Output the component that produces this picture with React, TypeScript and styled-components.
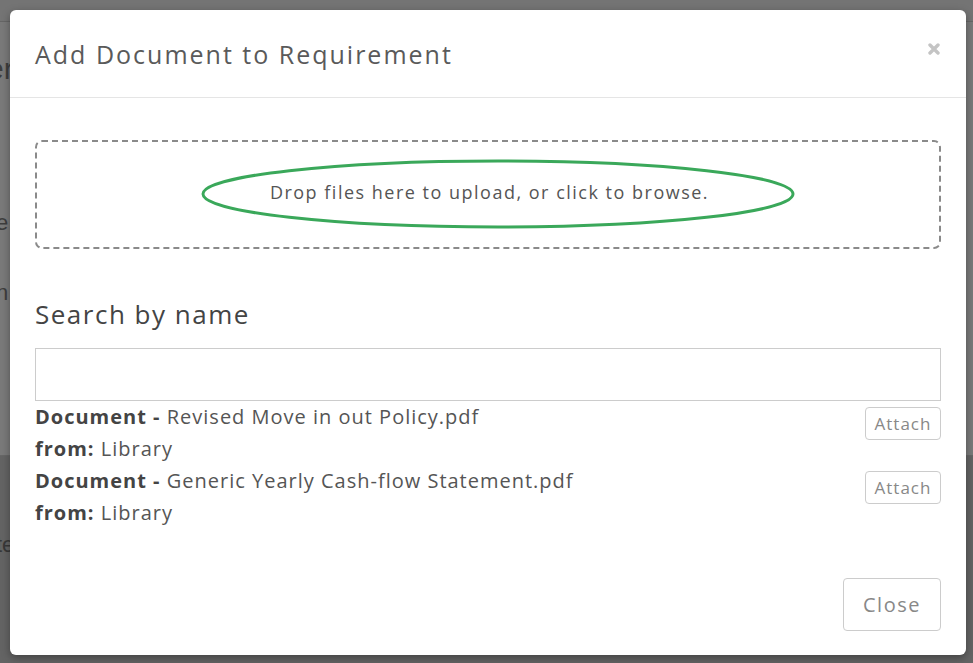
import React from 'react';
import styled, { createGlobalStyle } from 'styled-components';

const GlobalStyle = createGlobalStyle`
  html, body {
    margin: 0;
    padding: 0;
    height: 100%;
  }
  body {
    background: #6c6c6c;
    font-family: 'Open Sans', 'Liberation Sans', sans-serif;
    overflow: hidden;
  }
  * {
    box-sizing: border-box;
  }
`;

const Page = styled.div`
  position: relative;
  width: 973px;
  height: 663px;
  display: flex;
  flex-direction: column;
`;

const PageTop = styled.div`
  height: 22px;
  background: #747474;
  border-bottom: 1px solid #666;
`;

const PagePanel = styled.div`
  height: 434px;
  background: #7a7a7a;
  border-bottom: 1px solid #676767;
  display: flex;
  flex-direction: column;
  align-items: flex-start;
`;

const GhostText = styled.span<{ $size: number; $top: number; $shift: number }>`
  font-family: 'Liberation Sans', sans-serif;
  color: #2a2a2a;
  font-size: ${(p) => p.$size}px;
  line-height: ${(p) => p.$size + 4}px;
  margin-top: ${(p) => p.$top}px;
  margin-left: ${(p) => p.$shift}px;
  white-space: nowrap;
  opacity: 0.75;
`;

const PageRest = styled.div`
  flex: 1;
  background: #646464;
  display: flex;
  flex-direction: column;
  align-items: flex-start;
`;

const Modal = styled.div`
  position: absolute;
  left: 10px;
  top: 10px;
  width: 956px;
  height: 645px;
  background: #fff;
  border-radius: 6px;
  box-shadow: 0 3px 9px rgba(0, 0, 0, 0.35);
  display: flex;
  flex-direction: column;
`;

const Header = styled.div`
  height: 88px;
  border-bottom: 1px solid #e5e5e5;
  display: flex;
  align-items: center;
  justify-content: space-between;
  padding: 0 25px 0 25px;
`;

const Title = styled.h4`
  margin: 0;
  font-size: 25px;
  font-weight: 400;
  color: #5a5a5a;
  letter-spacing: 2px;
  padding-top: 1px;
`;

const CloseX = styled.button`
  border: none;
  background: none;
  padding: 0;
  margin-right: 1px;
  margin-bottom: 10px;
  display: flex;
  cursor: pointer;
`;

const Body = styled.div`
  padding: 42px 25px 0 25px;
  display: flex;
  flex-direction: column;
  flex: 1;
`;

const DropZone = styled.div`
  position: relative;
  height: 109px;
  border: 2px dashed #8a8a8a;
  border-radius: 7px;
  display: flex;
  align-items: center;
  justify-content: center;
  color: #555;
  font-size: 18px;
  letter-spacing: 1.5px;
`;

const DropText = styled.span`
  margin-left: 3px;
  margin-bottom: 5px;
`;

const Annotation = styled.svg`
  position: absolute;
  left: 163px;
  top: 16px;
  pointer-events: none;
`;

const SectionHeading = styled.h3`
  margin: 48px 0 0 0;
  font-size: 26px;
  font-weight: 400;
  color: #444;
  line-height: 34px;
  letter-spacing: 1.5px;
`;

const SearchInput = styled.input`
  margin-top: 17px;
  height: 53px;
  width: 100%;
  border: 1.5px solid #ccc;
  outline: none;
  font-size: 18px;
  padding: 0 12px;
`;

const ResultList = styled.div`
  display: flex;
  flex-direction: column;
`;

const ResultRow = styled.div`
  display: flex;
  justify-content: space-between;
  align-items: flex-start;
`;

const ResultInfo = styled.div`
  font-size: 20px;
  line-height: 32px;
  color: #555;
  letter-spacing: 1px;
`;

const Label = styled.b`
  color: #444;
  font-weight: 700;
`;

const SmallButton = styled.button`
  margin-top: 6px;
  height: 33px;
  width: 76px;
  padding: 0;
  background: #fff;
  border: 1px solid #ccc;
  border-radius: 4px;
  font-family: inherit;
  font-size: 17px;
  letter-spacing: 1px;
  color: #888;
  cursor: pointer;
`;

const Footer = styled.div`
  display: flex;
  justify-content: flex-end;
  padding: 0 25px 24px 25px;
`;

const CloseButton = styled.button`
  height: 53px;
  width: 98px;
  padding: 0;
  background: #fff;
  border: 1px solid #ccc;
  border-radius: 4px;
  font-family: inherit;
  font-size: 20px;
  letter-spacing: 1.5px;
  color: #888;
  cursor: pointer;
`;

const documents = [
  { id: 1, name: 'Revised Move in out Policy.pdf', from: 'Library' },
  { id: 2, name: 'Generic Yearly Cash-flow Statement.pdf', from: 'Library' },
];

const App: React.FC = () => {
  return (
    <>
      <GlobalStyle />
      <Page>
        <PageTop />
        <PagePanel>
          <GhostText $size={30} $top={30} $shift={-13}>er</GhostText>
          <GhostText $size={22} $top={124} $shift={-4}>e</GhostText>
          <GhostText $size={22} $top={44} $shift={-4}>n</GhostText>
        </PagePanel>
        <PageRest>
          <GhostText $size={22} $top={76} $shift={-4}>te</GhostText>
        </PageRest>
        <Modal>
          <Header>
            <Title>Add Document to Requirement</Title>
            <CloseX aria-label="close">
              <svg width="12" height="12" viewBox="0 0 12 12">
                <path
                  d="M2 2 L10 10 M10 2 L2 10"
                  stroke="#c4c4c4"
                  strokeWidth="3.4"
                  strokeLinecap="round"
                />
              </svg>
            </CloseX>
          </Header>
          <Body>
            <DropZone>
              <DropText>Drop files here to upload, or click to browse.</DropText>
              <Annotation width="596" height="72" viewBox="0 0 596 72">
                <ellipse
                  cx="298"
                  cy="36"
                  rx="295"
                  ry="33"
                  fill="none"
                  stroke="#3aa85a"
                  strokeWidth="3"
                />
              </Annotation>
            </DropZone>
            <SectionHeading>Search by name</SectionHeading>
            <SearchInput type="text" />
            <ResultList>
              {documents.map((doc) => (
                <ResultRow key={`doc-${doc.id}`}>
                  <ResultInfo>
                    <div>
                      <Label>Document - </Label>
                      {doc.name}
                    </div>
                    <div>
                      <Label>from:</Label> {doc.from}
                    </div>
                  </ResultInfo>
                  <SmallButton>Attach</SmallButton>
                </ResultRow>
              ))}
            </ResultList>
          </Body>
          <Footer>
            <CloseButton>Close</CloseButton>
          </Footer>
        </Modal>
      </Page>
    </>
  );
};

export default App;
